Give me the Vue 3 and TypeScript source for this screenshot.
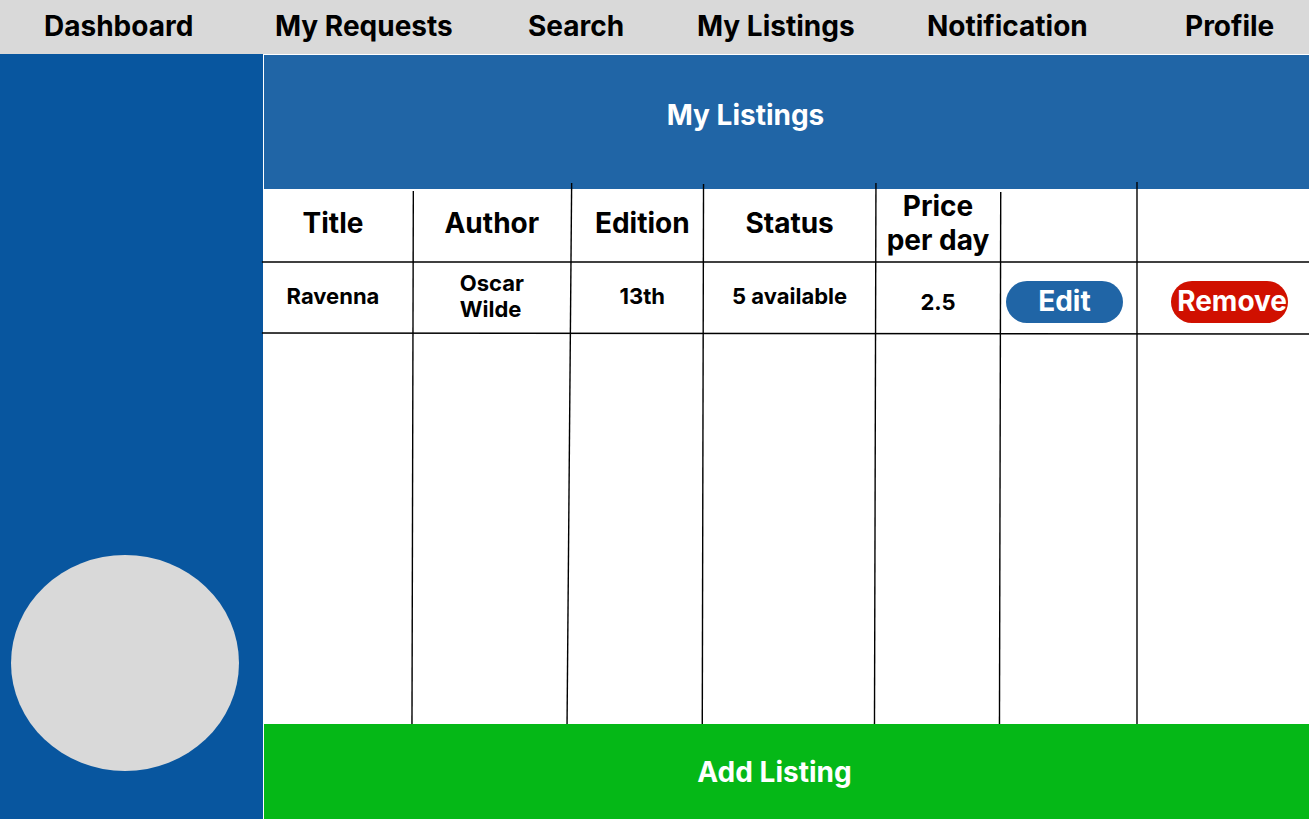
<script setup lang="ts">
interface Listing {
  title: string
  author: string
  edition: string
  status: string
  price: string
}

interface Rule {
  x1: string
  y1: number | string
  x2: string
  y2: number | string
}

const links: string[] = ['Dashboard', 'My Requests', 'Search', 'My Listings', 'Notification', 'Profile']

const listings: Listing[] = [
  { title: 'Ravenna', author: 'Oscar Wilde', edition: '13th', status: '5 available', price: '2.5' },
]

// Hand-drawn table rules: slightly slanted, some reaching up into the banner.
const rules: Rule[] = [
  { x1: '14.29%', y1: 2, x2: '14.16%', y2: '100%' },
  { x1: '29.44%', y1: -6, x2: '29%', y2: '100%' },
  { x1: '42.06%', y1: -5, x2: '41.94%', y2: '100%' },
  { x1: '58.56%', y1: -6, x2: '58.42%', y2: '100%' },
  { x1: '70.5%', y1: 3, x2: '70.38%', y2: '100%' },
  { x1: '83.54%', y1: -7, x2: '83.54%', y2: '100%' },
  { x1: '-0.2%', y1: 73, x2: '100%', y2: 73 },
  { x1: '-0.2%', y1: 144, x2: '100%', y2: 145 },
]
</script>

<template>
  <div class="page">
    <nav class="topbar">
      <a v-for="link in links" :key="link" href="#">{{ link }}</a>
    </nav>
    <div class="body">
      <aside class="sidebar">
        <div class="avatar"></div>
      </aside>
      <main class="content">
        <h1 class="banner">My Listings</h1>
        <section class="sheet">
          <table>
            <colgroup>
              <col class="c-title" />
              <col class="c-author" />
              <col class="c-edition" />
              <col class="c-status" />
              <col class="c-price" />
              <col class="c-edit" />
              <col />
            </colgroup>
            <thead>
              <tr>
                <th>Title</th>
                <th>Author</th>
                <th>Edition</th>
                <th>Status</th>
                <th>Price<br />per day</th>
                <th></th>
                <th></th>
              </tr>
            </thead>
            <tbody>
              <tr v-for="item in listings" :key="item.title">
                <td>{{ item.title }}</td>
                <td><span class="author">{{ item.author }}</span></td>
                <td>{{ item.edition }}</td>
                <td>{{ item.status }}</td>
                <td class="low">{{ item.price }}</td>
                <td class="low"><button type="button" class="pill edit">Edit</button></td>
                <td class="low last"><button type="button" class="pill remove">Remove</button></td>
              </tr>
            </tbody>
          </table>
          <svg class="rules" aria-hidden="true">
            <line v-for="(r, i) in rules" :key="i" :x1="r.x1" :y1="r.y1" :x2="r.x2" :y2="r.y2" />
          </svg>
        </section>
        <button type="button" class="add">Add Listing</button>
      </main>
    </div>
  </div>
</template>

<style>
body {
  margin: 0;
}
</style>

<style scoped>
.page {
  display: flex;
  flex-direction: column;
  min-height: 100vh;
  background: #fff;
  color: #000;
  font-family: Inter, 'Liberation Sans', sans-serif;
  font-size: 28px;
  font-weight: 700;
  line-height: 34px;
}

.topbar {
  display: grid;
  grid-template-columns: 231fr 253fr 169fr 230fr 258fr 124fr;
  align-items: center;
  height: 54px;
  padding: 0 0 2px 44px;
  box-sizing: border-box;
  background: #d9d9d9;
}

.topbar a {
  color: inherit;
  text-decoration: none;
  white-space: nowrap;
}

.body {
  flex: 1;
  display: flex;
}

.sidebar {
  flex: 0 0 263px;
  display: flex;
  flex-direction: column;
  justify-content: flex-end;
  box-sizing: border-box;
  padding: 0 24px 48px 11px;
  background: #08569f;
}

.avatar {
  height: 216px;
  border-radius: 50%;
  background: #d9d9d9;
}

.content {
  flex: 1;
  min-width: 0;
  display: flex;
  flex-direction: column;
  padding: 1px 0 0 1px;
}

.banner {
  display: flex;
  align-items: center;
  justify-content: center;
  height: 134px;
  box-sizing: border-box;
  margin: 0;
  padding: 0 82px 14px 0;
  background: #2065a6;
  color: #fff;
  font-size: 28px;
  font-weight: 700;
}

.sheet {
  flex: 1;
  position: relative;
}

.rules {
  position: absolute;
  inset: 0;
  width: 100%;
  height: 100%;
  overflow: visible;
  pointer-events: none;
}

.rules line {
  stroke: #000;
  stroke-width: 1.4;
}

table {
  width: 100%;
  table-layout: fixed;
  border-collapse: collapse;
}

.c-title { width: 13.2%; }
.c-author { width: 17.2%; }
.c-edition { width: 11.6%; }
.c-status { width: 16.6%; }
.c-price { width: 11.8%; }
.c-edit { width: 12.4%; }

th,
td {
  padding: 0;
  text-align: center;
  vertical-align: middle;
}

th {
  height: 73px;
  box-sizing: border-box;
  padding-bottom: 6px;
  font-weight: 700;
}

td {
  height: 71px;
  box-sizing: border-box;
  padding-bottom: 6px;
  font-size: 22px;
  line-height: 26px;
}

.low {
  padding: 6px 0 0;
}

.last {
  padding-left: 20px;
}

.author {
  display: inline-block;
  width: min-content;
  text-align: left;
  vertical-align: middle;
}

button {
  border: 0;
  color: #fff;
  font: inherit;
  cursor: pointer;
}

.pill {
  width: 117px;
  height: 42px;
  padding: 0 0 2px;
  border-radius: 21px;
  font-size: 28px;
  line-height: 34px;
  vertical-align: middle;
}

.edit {
  background: #2065a6;
}

.remove {
  padding-left: 6px;
  background: #d01000;
}

.add {
  height: 95px;
  padding: 0 24px 0 0;
  background: #05b817;
}
</style>
